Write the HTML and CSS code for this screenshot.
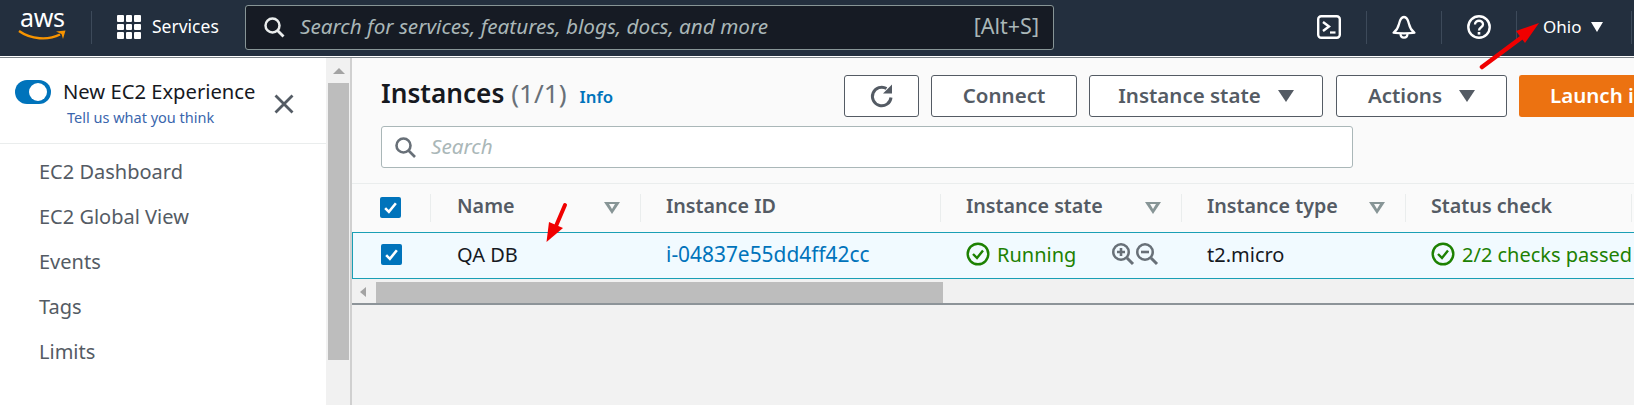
FILE: index.html
```html
<!DOCTYPE html>
<html lang="en">
<head>
<meta charset="utf-8">
<title>Instances | EC2</title>
<link rel="stylesheet" href="styles.css">
</head>
<body>
<header class="topbar">
  <div class="logo">
    <span class="logo-text">aws</span>
    <svg class="logo-smile" width="48" height="12" viewBox="0 0 48 12"><path d="M1 2C13 10.500 30 11.500 42 5.500" fill="none" stroke="#f79400" stroke-width="2.400"/><path d="M38 2.500L47.500 1.500L45 10L43.500 5Z" fill="#f79400"/></svg>
  </div>
  <div class="bar-div"></div>
  <div class="grid-icon"><i></i><i></i><i></i><i></i><i></i><i></i><i></i><i></i><i></i></div>
  <span class="services">Services</span>
  <div class="global-search">
    <svg class="gs-icon" width="22" height="22" viewBox="0 0 22 22"><circle cx="9.500" cy="9.500" r="7" fill="none" stroke="#eaeded" stroke-width="2.500"/><path d="M14.500 14.500L20.500 20.500" stroke="#eaeded" stroke-width="2.800"/></svg>
    <span class="gs-text">Search for services, features, blogs, docs, and more</span>
    <span class="gs-key">[Alt+S]</span>
  </div>
  <div class="bar-icons">
    <div class="bar-icon"><svg width="24" height="24" viewBox="0 0 24 24"><rect x="1.200" y="1.200" width="21.600" height="21.600" rx="3" fill="none" stroke="#fff" stroke-width="2.400"/><path d="M6 7L12 11.500L6 16" fill="none" stroke="#fff" stroke-width="2.400"/><path d="M13 17.500H18.500" stroke="#fff" stroke-width="2.200"/></svg></div>
    <div class="bar-div"></div>
    <div class="bar-icon"><svg width="24" height="24" viewBox="0 0 24 24"><path d="M1.500 18C4.500 15.500 6 13.500 7 9C8 4.500 9.500 2 12 2C14.500 2 16 4.500 17 9C18 13.500 19.500 15.500 22.500 18C22.500 18.400 1.500 18.400 1.500 18Z" fill="none" stroke="#fff" stroke-width="2.300" stroke-linejoin="round"/><path d="M8.500 18.500C8.500 24 15.500 24 15.500 18.500" fill="none" stroke="#fff" stroke-width="2.200"/></svg></div>
    <div class="bar-div"></div>
    <div class="bar-icon"><svg width="24" height="24" viewBox="0 0 24 24"><circle cx="12" cy="12" r="10.700" fill="none" stroke="#fff" stroke-width="2.400"/><path d="M8 9.500C8 4.500 16 4.500 16 9.500C16 12.500 12 12 12 15.500" fill="none" stroke="#fff" stroke-width="2.300"/><rect x="10.700" y="17" width="2.600" height="2.600" fill="#fff"/></svg></div>
    <div class="bar-div"></div>
    <span class="region">Ohio</span>
    <span class="region-caret"></span>
    <div class="bar-div region-end"></div>
  </div>
</header>
<div class="rule"></div>
<div class="layout">
  <aside class="sidebar">
    <div class="experience">
      <span class="toggle"><span class="knob"></span></span>
      <div class="exp-text">
        <div class="exp-title">New EC2 Experience</div>
        <a class="exp-link">Tell us what you think</a>
      </div>
      <svg class="exp-close" width="20" height="20" viewBox="0 0 20 20"><path d="M1.500 1.500L18.500 18.500M18.500 1.500L1.500 18.500" stroke="#545b64" stroke-width="2.800"/></svg>
    </div>
    <nav class="side-nav">
      <a>EC2 Dashboard</a>
      <a>EC2 Global View</a>
      <a>Events</a>
      <a>Tags</a>
      <a>Limits</a>
    </nav>
  </aside>
  <div class="v-scroll">
    <span class="v-arrow"></span>
    <div class="v-thumb"></div>
  </div>
  <main class="content">
    <div class="panel">
      <div class="head">
        <div class="title-block">
          <h1 class="title">Instances <span class="count">(1/1)</span></h1>
          <a class="info">Info</a>
        </div>
        <div class="actions">
          <button class="btn btn-refresh"><svg width="26" height="26" viewBox="0 0 26 26"><path d="M22 14.500A9.300 9.300 0 1 1 17.500 5.500" fill="none" stroke="#545b64" stroke-width="3"/><path d="M14 10.500H23V1.500Z" fill="#545b64"/></svg></button>
          <button class="btn btn-connect"><span class="btn-label">Connect</span></button>
          <button class="btn btn-state"><span class="btn-label">Instance state</span><span class="caret"></span></button>
          <button class="btn btn-actions"><span class="btn-label">Actions</span><span class="caret"></span></button>
          <button class="btn btn-launch"><span class="btn-label">Launch i</span></button>
        </div>
      </div>
      <div class="search">
        <svg width="22" height="22" viewBox="0 0 22 22"><circle cx="9.500" cy="9.500" r="7" fill="none" stroke="#687078" stroke-width="2.600"/><path d="M14.500 14.500L21 21" stroke="#687078" stroke-width="2.600"/></svg>
        <span class="search-text">Search</span>
      </div>
      <div class="table-wrap">
        <div class="row row-head">
          <div class="cell c-check"><span class="check"><svg width="15" height="15" viewBox="0 0 14 14"><path d="M2 7.500L5.500 11L12 3" fill="none" stroke="#fff" stroke-width="2.400"/></svg></span></div>
          <div class="cell c-name">Name<span class="sort"></span></div>
          <div class="cell c-id">Instance ID</div>
          <div class="cell c-state">Instance state<span class="sort"></span></div>
          <div class="cell c-type">Instance type<span class="sort"></span></div>
          <div class="cell c-status">Status check</div>
        </div>
        <div class="row row-sel">
          <div class="cell c-check"><span class="check"><svg width="15" height="15" viewBox="0 0 14 14"><path d="M2 7.500L5.500 11L12 3" fill="none" stroke="#fff" stroke-width="2.400"/></svg></span></div>
          <div class="cell c-name">QA DB</div>
          <div class="cell c-id"><a class="link">i-04837e55dd4ff42cc</a></div>
          <div class="cell c-state">
            <svg class="ok" width="24" height="24" viewBox="0 0 24 24"><circle cx="12" cy="12" r="10.300" fill="none" stroke="#1d8102" stroke-width="2.400"/><path d="M7 12L11 16L17 8.500" fill="none" stroke="#1d8102" stroke-width="2.400"/></svg>
            <span class="green">Running</span>
            <span class="zooms">
              <svg width="25" height="24" viewBox="0 0 25 24"><circle cx="10" cy="10" r="8" fill="#687078" stroke="#687078" stroke-width="2"/><circle cx="10" cy="10" r="6.500" fill="#f1faff"/><path d="M16 16L22 22" stroke="#687078" stroke-width="3"/><path d="M6 10H14M10 6V14" stroke="#687078" stroke-width="2.600"/></svg>
              <svg width="25" height="24" viewBox="0 0 25 24"><circle cx="10" cy="10" r="8" fill="#687078" stroke="#687078" stroke-width="2"/><circle cx="10" cy="10" r="6.500" fill="#f1faff"/><path d="M16 16L22 22" stroke="#687078" stroke-width="3"/><path d="M6 10H14" stroke="#687078" stroke-width="2.600"/></svg>
            </span>
          </div>
          <div class="cell c-type">t2.micro</div>
          <div class="cell c-status">
            <svg class="ok" width="24" height="24" viewBox="0 0 24 24"><circle cx="12" cy="12" r="10.300" fill="none" stroke="#1d8102" stroke-width="2.400"/><path d="M7 12L11 16L17 8.500" fill="none" stroke="#1d8102" stroke-width="2.400"/></svg>
            <span class="green">2/2 checks passed</span>
          </div>
        </div>
        <div class="h-scroll">
          <span class="h-arrow"></span>
          <div class="h-thumb"></div>
        </div>
      </div>
    </div>
  </main>
</div>
<svg class="annot" width="1634" height="405" viewBox="0 0 1634 405">
  <path d="M1482 67L1525 35" stroke="#f00000" stroke-width="4.500" stroke-linecap="round"/>
  <path d="M1539 23L1516 31L1525 43Z" fill="#f00000"/>
  <path d="M565 205L556 226" stroke="#f00000" stroke-width="4" stroke-linecap="round"/>
  <path d="M546.500 242L549 222L563 228Z" fill="#f00000"/>
</svg>
</body>
</html>
```
FILE: styles.css
```css
* { box-sizing: border-box; }
html, body { margin: 0; padding: 0; }
body {
  width: 1634px;
  height: 405px;
  overflow: hidden;
  position: relative;
  background: #f2f2f2;
  font-family: "Noto Sans", sans-serif;
  color: #16191f;
}
.topbar {
  height: 56px;
  padding-bottom: 2px;
  background: #232f3e;
  display: flex;
  align-items: center;
  color: #fff;
}
.logo { width: 91px; padding-left: 18px; display: flex; flex-direction: column; flex: none; }
.logo-text { font-size: 25px; line-height: 20px; margin: -6px 0 0 2px; color: #fff; letter-spacing: -.4px; }
.logo-smile { margin-top: 2px; }
.bar-div { width: 1px; height: 33px; background: #3d4a5a; flex: none; }
.grid-icon {
  margin-left: 25px;
  width: 24px;
  height: 24px;
  display: grid;
  grid-template-columns: repeat(3, 6.500px);
  grid-template-rows: repeat(3, 6.500px);
  gap: 2px;
  flex: none;
}
.grid-icon i { background: #fff; border-radius: 1px; }
.services { margin-left: 11px; padding-bottom: 2px; font-size: 17.500px; width: 93px; flex: none; }
.global-search {
  width: 809px;
  height: 45px;
  background: #161b24;
  border: 1px solid #879596;
  border-radius: 3px;
  display: flex;
  align-items: center;
  padding: 0 14px 0 17px;
  flex: none;
}
.gs-icon { flex: none; }
.gs-text { margin-left: 15px; padding-bottom: 3px; font-size: 20.700px; font-style: italic; color: #aab7b8; flex: 1; white-space: nowrap; }
.gs-key { padding-bottom: 3px; font-size: 21.500px; color: #aab7b8; }
.bar-icons { flex: 1; display: flex; align-items: center; padding-left: 238px; }
.bar-icon { width: 74px; height: 24px; display: flex; justify-content: center; flex: none; }
.region { margin-left: 26px; padding-bottom: 2px; font-size: 17px; }
.region-caret {
  margin-left: 10px;
  width: 0; height: 0;
  border-left: 6px solid transparent;
  border-right: 6px solid transparent;
  border-top: 10px solid #fff;
  flex: none;
}
.region-end { margin-left: 28px; }
.rule { height: 2px; background: #fff; border-bottom: 1px solid #7d8489; }
.layout { display: flex; height: 347px; }
.sidebar { width: 326px; background: #fff; flex: none; }
.experience {
  height: 86px;
  border-bottom: 1px solid #eaeded;
  display: flex;
  padding: 22px 0 0 15px;
}
.toggle {
  width: 36px; height: 24px;
  border-radius: 12px;
  background: #0073bb;
  position: relative;
  flex: none;
}
.knob { position: absolute; left: 14px; top: 3px; width: 18px; height: 18px; border-radius: 50%; background: #fff; }
.exp-text { margin: -2px 0 0 12px; }
.exp-title { font-size: 20.200px; line-height: 26px; color: #16191f; white-space: nowrap; }
.exp-link { display: block; margin: 4px 0 0 4px; font-size: 14.500px; line-height: 18px; color: #3a66ad; white-space: nowrap; }
.exp-close { margin: 14px 0 0 19px; flex: none; }
.side-nav { display: flex; flex-direction: column; padding-top: 12px; }
.side-nav a { height: 45px; line-height: 31px; padding-left: 39px; font-size: 20px; color: #545b64; }
.v-scroll {
  width: 26px;
  flex: none;
  background: #f1f1f1;
  padding-left: 2px;
  display: flex;
  flex-direction: column;
  align-items: flex-start;
  border-right: 2px solid #d0d0d0;
}
.v-arrow { width: 0; height: 0; margin: 10px 0 9px 5px; border-left: 6px solid transparent; border-right: 6px solid transparent; border-bottom: 6px solid #a3a3a3; }
.v-thumb { width: 21px; height: 277px; background: #bdbdbd; }
.content { flex: 1; min-width: 0; overflow: hidden; }
.panel { background: #fafafa; }
.head { height: 68px; display: flex; align-items: flex-start; padding: 17px 0 0 29px; }
.title-block { width: 463px; flex: none; display: flex; align-items: flex-start; }
.title { margin: 3px 0 0; font-size: 26.200px; line-height: 30px; font-weight: 600; white-space: nowrap; color: #16191f; }
.count { font-weight: 400; color: #687078; }
.info { margin: 12px 0 0 13px; font-size: 16.800px; line-height: 20px; font-weight: 600; color: #0073bb; }
.actions { display: flex; gap: 12px; }
.btn {
  height: 42px;
  background: #fff;
  border: 1px solid #545b64;
  border-radius: 3px;
  font-family: inherit;
  font-size: 20.500px;
  font-weight: 600;
  color: #545b64;
  display: flex;
  align-items: center;
  justify-content: center;
  padding: 0;
  white-space: nowrap;
  flex: none;
}
.btn-label { padding-bottom: 3px; }
.btn-refresh { width: 75px; }
.btn-connect { width: 146px; }
.btn-state { width: 234px; }
.btn-actions { width: 171px; margin-left: 1px; }
.btn-launch { width: 116px; background: #ec7211; border-color: #ec7211; color: #fff; justify-content: flex-start; padding-left: 30px; border-radius: 3px 0 0 3px; border-right: 0; }
.caret {
  margin-left: 17px;
  width: 0; height: 0;
  border-left: 8px solid transparent;
  border-right: 8px solid transparent;
  border-top: 12px solid #545b64;
  flex: none;
}
.search {
  margin-left: 29px;
  width: 972px;
  height: 42px;
  background: #fff;
  border: 1px solid #aab7b8;
  border-radius: 3px;
  display: flex;
  align-items: center;
  padding-left: 12px;
}
.search-text { margin-left: 15px; padding-bottom: 2px; font-size: 20.700px; font-style: italic; color: #aab7b8; }
.table-wrap { margin-top: 15px; border-top: 1px solid #eaeded; }
.row { display: flex; align-items: center; width: 100%; }
.row-head { height: 48px; font-size: 19.700px; font-weight: 600; color: #545b64; }
.row-sel { height: 47px; background: #f1faff; border: 1px solid #1a9fb5; border-right: 0; font-size: 20px; }
.cell { display: flex; align-items: center; height: 100%; white-space: nowrap; position: relative; flex: none; }
.row-head .cell { padding-bottom: 5px; }
.row-sel .cell { padding-bottom: 3px; }
.row-head .cell::after { content: ""; position: absolute; right: 0; top: 10px; bottom: 10px; width: 1px; background: #eaeded; }
.c-check { width: 79px; padding-left: 28px; }
.row-head .c-check { padding-bottom: 2px; }
.c-name { width: 210px; padding-left: 26px; }
.c-id { width: 300px; padding-left: 25px; }
.c-state { width: 241px; padding-left: 25px; }
.c-type { width: 224px; padding-left: 25px; }
.c-status { width: 226px; padding-left: 25px; }
.row-sel .c-check { padding-left: 28px; width: 78px; }
.check { width: 21px; height: 21px; border-radius: 2px; background: #0073bb; display: flex; align-items: center; justify-content: center; }
.sort {
  position: absolute;
  right: 21px;
  top: 50%;
  margin-top: -6px;
  width: 0; height: 0;
  border-left: 8px solid transparent;
  border-right: 8px solid transparent;
  border-top: 12px solid #879596;
}
.sort::after {
  content: "";
  position: absolute;
  left: -3px;
  top: -10px;
  width: 0; height: 0;
  border-left: 3px solid transparent;
  border-right: 3px solid transparent;
  border-top: 5px solid #fafafa;
}
.link { color: #0073bb; font-size: 20.900px; }
.green { color: #1d8102; }
.ok { margin-right: 7px; flex: none; }
.zooms { margin-left: 35px; display: flex; }
.zooms svg + svg { margin-left: -1px; }
.h-scroll { height: 26px; background: #f1f1f1; border-bottom: 2px solid #8d9499; display: flex; align-items: center; padding: 2px 0 0 8px; }
.h-arrow { width: 0; height: 0; border-top: 5px solid transparent; border-bottom: 5px solid transparent; border-right: 6px solid #a3a3a3; flex: none; }
.h-thumb { margin-left: 10px; width: 567px; height: 21px; background: #bdbdbd; }
.annot { position: absolute; left: 0; top: 0; pointer-events: none; }
```
